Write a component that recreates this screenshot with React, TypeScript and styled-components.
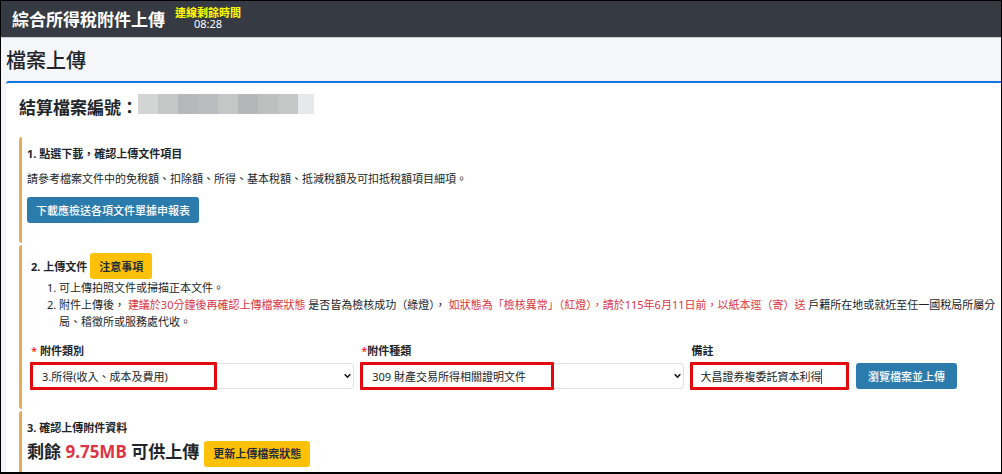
import React from "react";
import styled, { createGlobalStyle } from "styled-components";

const GlobalStyle = createGlobalStyle`
  *, *::before, *::after { box-sizing: border-box; }
  body {
    margin: 0;
    color: #212529;
    background: #f4f6f9;
    font-family: "Noto Sans", "Noto Sans CJK TC", sans-serif;
    font-size: 11px;
    line-height: 17px;
  }
  button, input, select { font: inherit; color: inherit; }
`;

const Page = styled.div`
  display: flex;
  flex-direction: column;
  min-height: 100vh;
  border: 1px solid #000;
  border-bottom-width: 2px;
`;

const TopBar = styled.header`
  display: flex;
  align-items: center;
  gap: 10px;
  height: 37px;
  padding: 2px 11px 0;
  color: #fff;
  background: #363a42;
  border-bottom: 1px solid #c8cace;
`;

const Brand = styled.h1`
  margin: 0;
  font-size: 17px;
  line-height: 24px;
  font-weight: 700;
`;

const Timer = styled.div`
  display: flex;
  flex-direction: column;
  align-items: center;
  padding-bottom: 5px;
  line-height: 11px;
`;

const TimerLabel = styled.strong`
  color: #ff0;
`;

const PageTitle = styled.h2`
  margin: 0;
  padding: 11px 5px 8px;
  font-size: 20px;
  line-height: 24px;
  font-weight: 500;
`;

const Card = styled.main`
  flex: 1;
  display: flex;
  flex-direction: column;
  margin-left: 5px;
  padding: 11px 3px 0 13px;
  background: #fff;
  border-top: 2px solid #1677e0;
  border-radius: 3px 0 0 0;
  box-shadow: 0 0 1px rgba(0, 0, 0, 0.2);
`;

const FileNumber = styled.div`
  display: flex;
  align-items: flex-start;
  font-size: 17px;
  line-height: 27px;
  font-weight: 700;
  margin-bottom: 16px;
`;

const Mask = styled.span`
  display: flex;
  height: 20px;
`;

const MaskBlock = styled.span<{ $tone: string; $last?: boolean }>`
  width: ${(p) => (p.$last ? 16 : 20)}px;
  background: ${(p) => p.$tone};
`;

const Step = styled.section<{ $indent?: boolean }>`
  margin-bottom: 2px;
  padding: 8px 0 20px ${(p) => (p.$indent ? 9 : 5)}px;
  border-left: 3px solid #e9ab53;
  border-radius: 3px;

  &:last-child {
    flex: 1;
    margin-bottom: 0;
    padding-bottom: 3px;
    border-radius: 3px 0 0 0;
  }
`;

const StepTitle = styled.h3`
  margin: 0;
  font-size: 11px;
  line-height: 17px;
  font-weight: 700;
`;

const StepHead = styled.div`
  display: flex;
  align-items: center;
  gap: 3px;
`;

const Paragraph = styled.p`
  margin: 8px 0 10px;
`;

const Button = styled.button<{ $kind: "info" | "warning"; $wide?: boolean }>`
  height: 26px;
  padding: 0 ${(p) => (p.$wide ? 12 : 9)}px;
  border: 0;
  border-radius: 3px;
  font-weight: ${(p) => (p.$kind === "warning" ? 700 : 500)};
  color: ${(p) => (p.$kind === "warning" ? "#1f2d3d" : "#fff")};
  background: ${(p) => (p.$kind === "warning" ? "#ffc107" : "#2b7bac")};
`;

const Notes = styled.ol`
  margin: 0 0 12px;
  padding-left: 28px;
`;

const Danger = styled.span`
  color: #dc3545;
`;

const Fields = styled.form`
  display: grid;
  grid-template-columns: 41fr 41fr 20fr 18fr;
  column-gap: 7px;
  align-items: end;
`;

const Field = styled.div`
  min-width: 0;
`;

const Label = styled.label`
  display: block;
  margin-bottom: 4px;
  font-weight: 700;
`;

const Star = styled.span`
  color: #f00;
  font-weight: 400;
`;

const Control = styled.div`
  position: relative;
`;

const Select = styled.select`
  appearance: none;
  display: block;
  width: 100%;
  height: 26px;
  padding: 0 18px 0 10px;
  border: 1px solid #dfe2e6;
  border-radius: 3px;
  background: #fff;
`;

const Chevron = styled.svg`
  position: absolute;
  top: 10px;
  right: 3px;
  width: 7px;
  height: 6px;
  pointer-events: none;
`;

const TextInput = styled.input`
  display: block;
  width: 100%;
  height: 26px;
  padding: 0 8px;
  border: 1px solid #dfe2e6;
  border-radius: 3px;
  background: #fff;
`;

const Caret = styled.span`
  position: absolute;
  top: 6px;
  left: 130px;
  width: 1px;
  height: 15px;
  background: #555;
`;

const Highlight = styled.span<{ $width: string }>`
  position: absolute;
  top: -1px;
  left: -1px;
  width: ${(p) => p.$width};
  height: 28px;
  border: 3px solid #e3080d;
  border-radius: 1px;
  pointer-events: none;
`;

const Quota = styled.div`
  display: flex;
  align-items: baseline;
  gap: 5px;
  margin-top: 2px;
`;

const QuotaText = styled.strong`
  font-size: 17px;
  line-height: 28px;
`;

const maskTones = [
  "#d3d5d4", "#c5c7c6", "#b7b8bb", "#bbbcbf", "#c5c7c6",
  "#b5b6b9", "#bec0bf", "#c5c7c6", "#e6e8e9",
];

const SelectArrow = () => (
  <Chevron viewBox="0 0 7 6" aria-hidden="true">
    <path d="M0.7 1.2 L3.5 4.2 L6.3 1.2" fill="none" stroke="#111" strokeWidth="1.6" />
  </Chevron>
);

export default function App() {
  return (
    <Page>
      <GlobalStyle />
      <TopBar>
        <Brand>綜合所得稅附件上傳</Brand>
        <Timer>
          <TimerLabel>連線剩餘時間</TimerLabel>
          <span>08:28</span>
        </Timer>
      </TopBar>
      <PageTitle>檔案上傳</PageTitle>
      <Card>
        <FileNumber>
          結算檔案編號：
          <Mask>
            {maskTones.map((tone, i) => (
              <MaskBlock key={i} $tone={tone} $last={i === maskTones.length - 1} />
            ))}
          </Mask>
        </FileNumber>

        <Step>
          <StepTitle>1. 點選下載，確認上傳文件項目</StepTitle>
          <Paragraph>
            請參考檔案文件中的免稅額、扣除額、所得、基本稅額、抵減稅額及可扣抵稅額項目細項。
          </Paragraph>
          <Button type="button" $kind="info">下載應檢送各項文件單據申報表</Button>
        </Step>

        <Step $indent>
          <StepHead>
            <StepTitle>2. 上傳文件</StepTitle>
            <Button type="button" $kind="warning">注意事項</Button>
          </StepHead>
          <Notes>
            <li>可上傳拍照文件或掃描正本文件。</li>
            <li>
              附件上傳後， <Danger>建議於30分鐘後再確認上傳檔案狀態</Danger>{" "}
              是否皆為檢核成功（綠燈），{" "}
              <Danger>如狀態為「檢核異常」（紅燈），請於115年6月11日前，以紙本逕（寄）送</Danger>{" "}
              戶籍所在地或就近至任一國稅局所屬分局、稽徵所或服務處代收。
            </li>
          </Notes>
          <Fields onSubmit={(e) => e.preventDefault()}>
            <Field>
              <Label htmlFor="category"><Star>*</Star> 附件類別</Label>
              <Control>
                <Select id="category">
                  <option>3.所得(收入、成本及費用)</option>
                </Select>
                <SelectArrow />
                <Highlight $width="58%" />
              </Control>
            </Field>
            <Field>
              <Label htmlFor="kind"><Star>*</Star>附件種類</Label>
              <Control>
                <Select id="kind">
                  <option>309 財產交易所得相關證明文件</option>
                </Select>
                <SelectArrow />
                <Highlight $width="60%" />
              </Control>
            </Field>
            <Field>
              <Label htmlFor="remark">備註</Label>
              <Control>
                <TextInput id="remark" type="text" defaultValue="大昌證券複委託資本利得" />
                <Caret />
                <Highlight $width="calc(100% + 1px)" />
              </Control>
            </Field>
            <Field>
              <Button type="button" $kind="info" $wide>瀏覽檔案並上傳</Button>
            </Field>
          </Fields>
        </Step>

        <Step>
          <StepTitle>3. 確認上傳附件資料</StepTitle>
          <Quota>
            <QuotaText>
              剩餘 <Danger>9.75MB</Danger> 可供上傳
            </QuotaText>
            <Button type="button" $kind="warning">更新上傳檔案狀態</Button>
          </Quota>
        </Step>
      </Card>
    </Page>
  );
}
